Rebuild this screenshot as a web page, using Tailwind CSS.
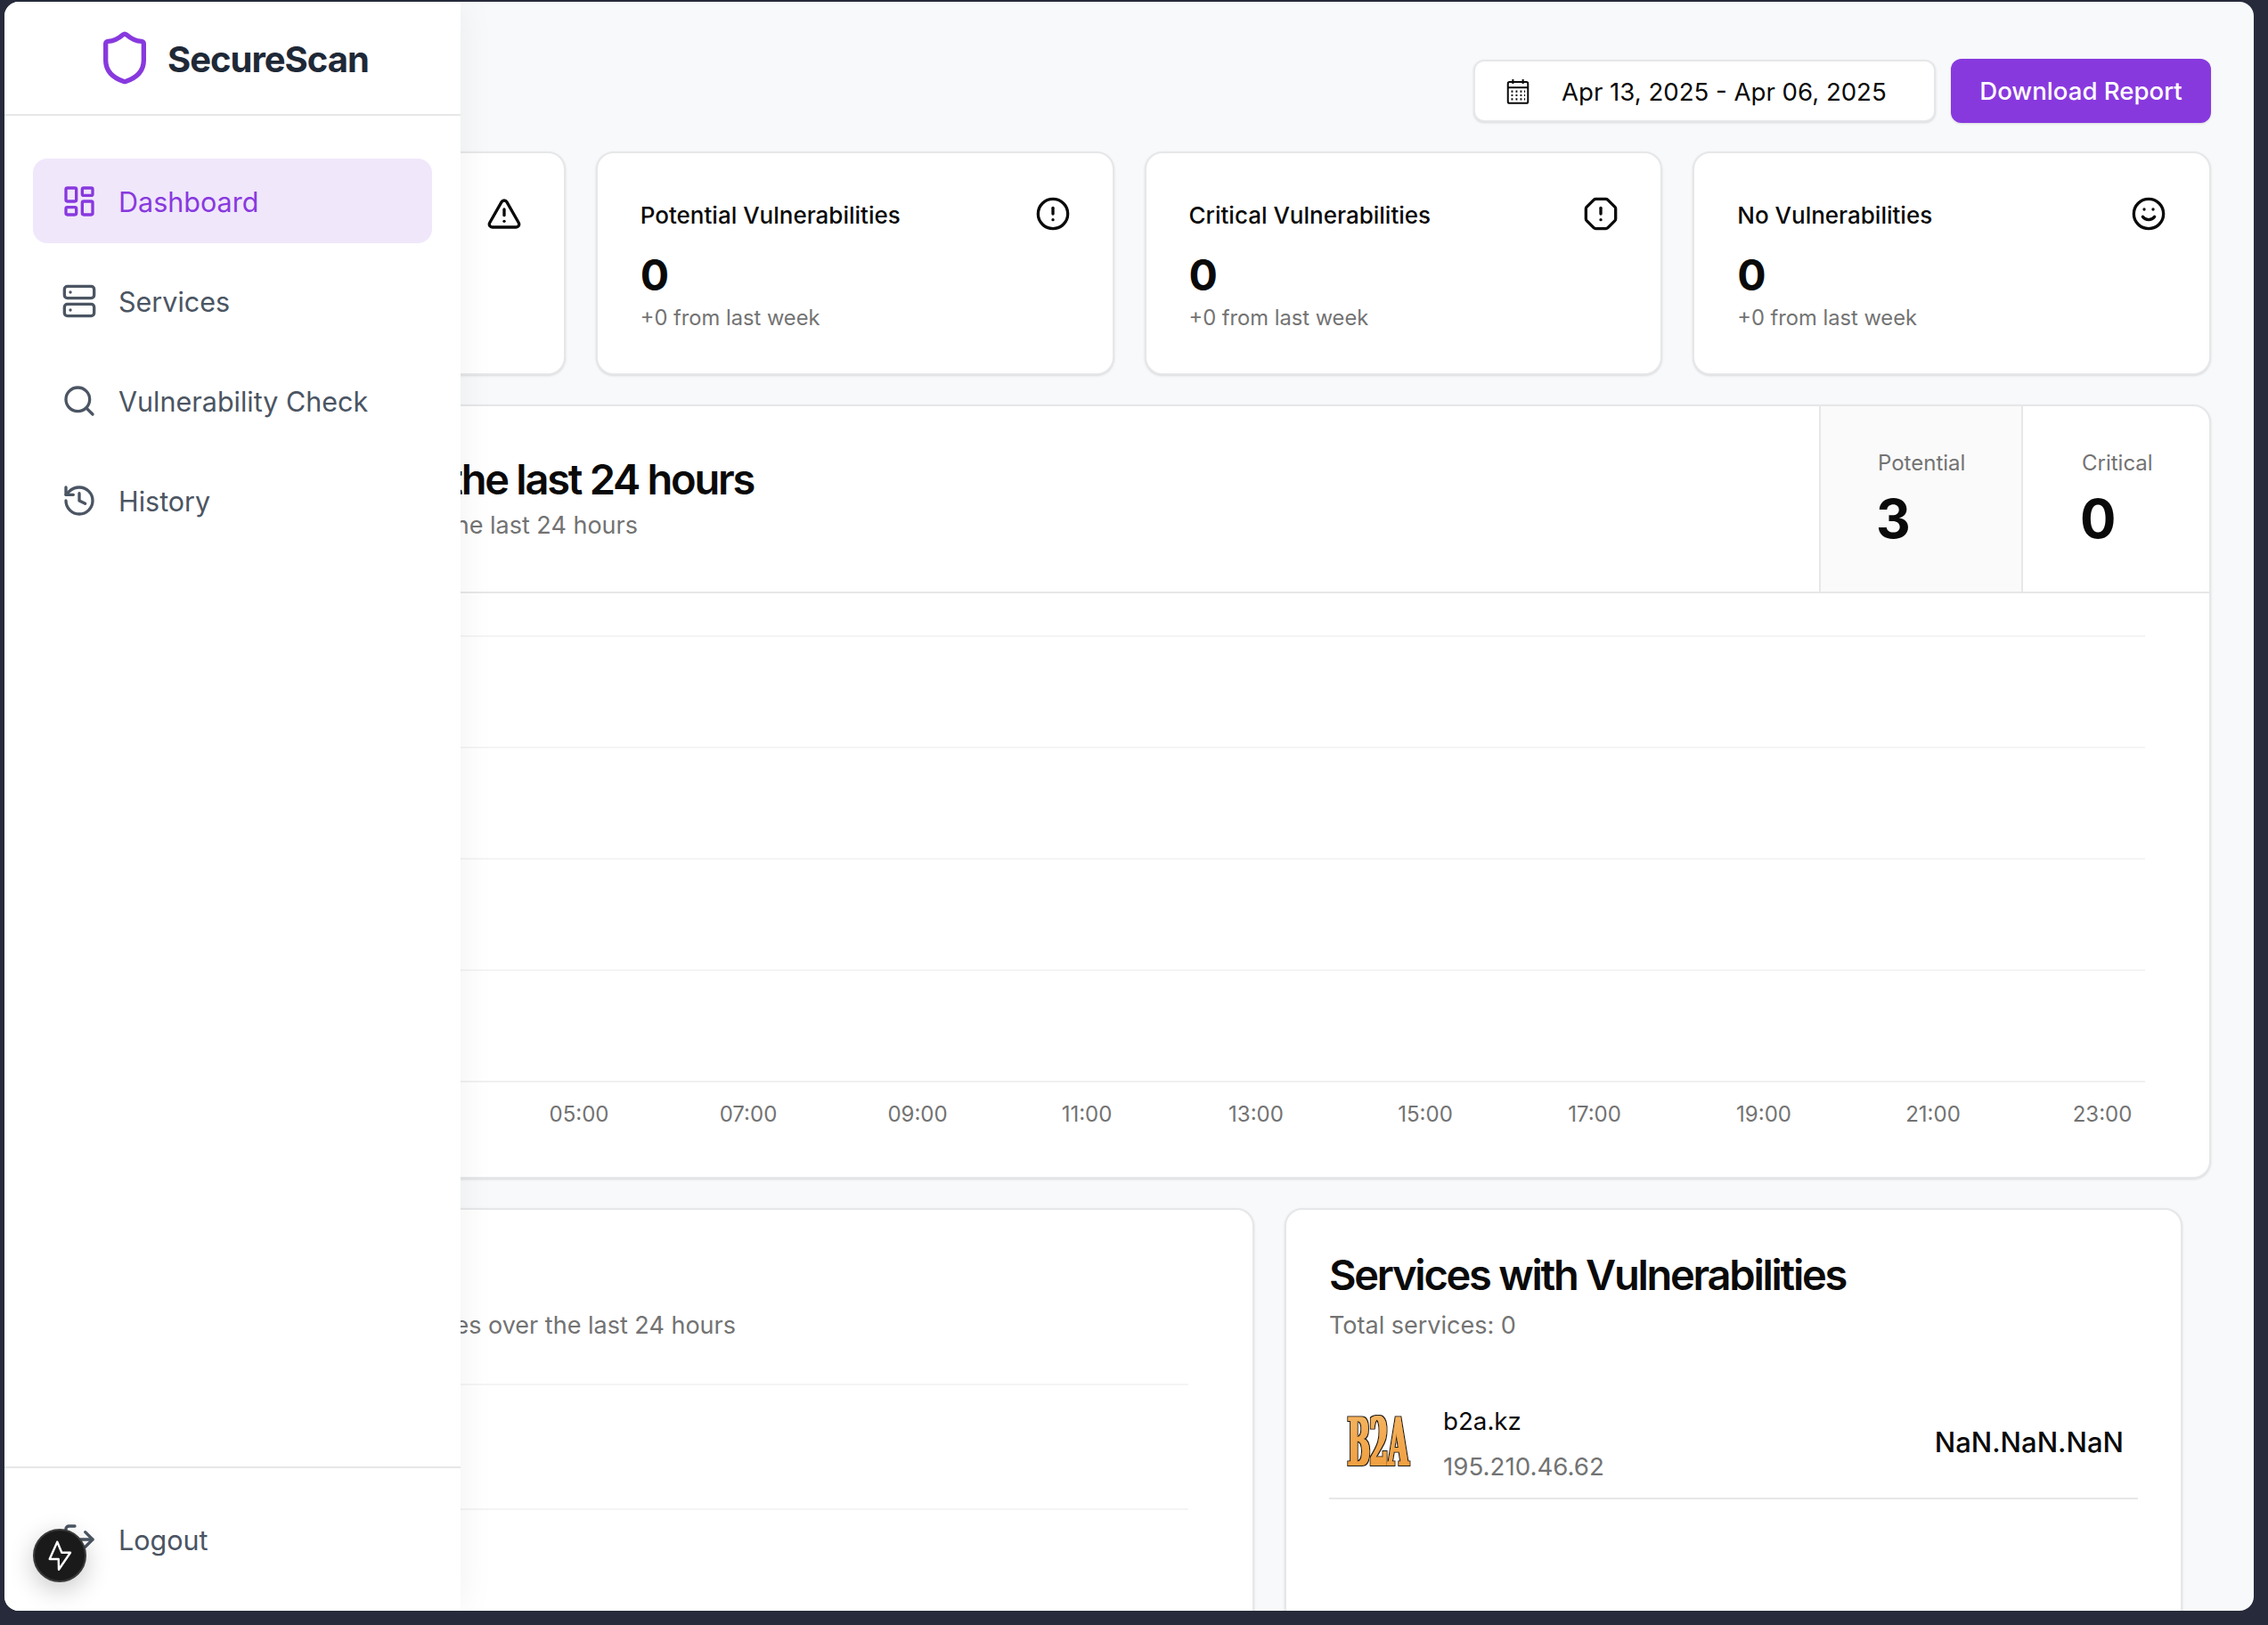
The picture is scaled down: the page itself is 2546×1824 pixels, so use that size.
<!DOCTYPE html>
<html lang="en">
<head>
<meta charset="utf-8">
<title>SecureScan</title>
<script src="https://cdn.jsdelivr.net/npm/@tailwindcss/browser@4"></script>
</head>
<body class="bg-[#262a3a] font-['Inter',sans-serif] overflow-hidden">
<div class="w-[2546px] h-[1824px] pt-[2px] pl-[5px]">
  <div class="relative w-[2525px] h-[1806px] bg-[#f8f9fb] rounded-[16px] overflow-hidden">
    <!-- main -->
    <main class="pt-[64px] pl-[48px] pr-[48px]">
      <div class="flex items-center justify-end h-[72px] mb-[32px]">
        <div class="flex gap-[17px] items-center">
          <button class="flex items-center w-[519px] h-[70px] pl-[33px] pt-[3px] bg-white border-2 border-[#e6e7e9] rounded-[12px] shadow-sm text-[27.6px] text-[#0a0a0a]">
            <svg class="w-[30px] h-[30px] mr-[34px] -mt-[3px]" viewBox="0 0 24 24" fill="none" stroke="#0a0a0a" stroke-width="1.6"><rect x="3" y="4" width="18" height="19" rx="1.5"/><path d="M3 9h18M7.5 1.5v4M16.5 1.5v4"/><path d="M6 12.5h1.5M10 12.5h1.5M14 12.5h1.5M17.5 12.5h1M6 16h1.5M10 16h1.5M14 16h1.5M17.5 16h1M6 19.5h1.5M10 19.5h1.5M14 19.5h1.5M17.5 19.5h1" stroke-width="1.7"/></svg>
            Apr 13, 2025 - Apr 06, 2025
          </button>
          <button class="w-[292px] h-[72px] pt-[2px] bg-[#8839de] rounded-[12px] shadow-sm text-[27.6px] font-medium text-white">Download Report</button>
        </div>
      </div>

      <div class="grid grid-cols-4 gap-[34px] mb-[33px]">
        <div class="h-[251px] bg-white border-2 border-[#e6e7e9] rounded-[20px] shadow-sm pt-[48px] pl-[48px] pr-[47px]">
          <div class="flex justify-end items-center h-[40px]">
            <svg class="w-[40px] h-[40px]" viewBox="0 0 24 24" fill="none" stroke="#0a0a0a" stroke-width="2" stroke-linecap="round" stroke-linejoin="round"><path d="m21.73 18-8-14a2 2 0 0 0-3.48 0l-8 14A2 2 0 0 0 4 21h16a2 2 0 0 0 1.73-3"/><path d="M12 9v4"/><path d="M12 17h.01"/></svg>
          </div>
        </div>
        <div class="h-[251px] bg-white border-2 border-[#e6e7e9] rounded-[20px] shadow-sm pt-[48px] pl-[48px] pr-[47px]">
          <div class="flex justify-between items-center h-[40px]">
            <span class="text-[26px] font-medium text-[#0a0a0a] pt-[2px]">Potential Vulnerabilities</span>
            <svg class="w-[40px] h-[40px]" viewBox="0 0 24 24" fill="none" stroke="#0a0a0a" stroke-width="2" stroke-linecap="round" stroke-linejoin="round"><circle cx="12" cy="12" r="10"/><path d="M12 8v4"/><path d="M12 16h.01"/></svg>
          </div>
          <div class="text-[48px] font-bold leading-none text-[#0a0a0a] mt-[25px]">0</div>
          <div class="text-[23.7px] leading-[36px] text-[#737373] mt-[6px]">+0 from last week</div>
        </div>
        <div class="h-[251px] bg-white border-2 border-[#e6e7e9] rounded-[20px] shadow-sm pt-[48px] pl-[48px] pr-[47px]">
          <div class="flex justify-between items-center h-[40px]">
            <span class="text-[26px] font-medium text-[#0a0a0a] pt-[2px]">Critical Vulnerabilities</span>
            <svg class="w-[40px] h-[40px]" viewBox="0 0 24 24" fill="none" stroke="#0a0a0a" stroke-width="2" stroke-linecap="round" stroke-linejoin="round"><path d="M12 16h.01"/><path d="M12 8v4"/><path d="M15.312 2a2 2 0 0 1 1.414.586l4.688 4.688A2 2 0 0 1 22 8.688v6.624a2 2 0 0 1-.586 1.414l-4.688 4.688a2 2 0 0 1-1.414.586H8.688a2 2 0 0 1-1.414-.586l-4.688-4.688A2 2 0 0 1 2 15.312V8.688a2 2 0 0 1 .586-1.414l4.688-4.688A2 2 0 0 1 8.688 2z"/></svg>
          </div>
          <div class="text-[48px] font-bold leading-none text-[#0a0a0a] mt-[25px]">0</div>
          <div class="text-[23.7px] leading-[36px] text-[#737373] mt-[6px]">+0 from last week</div>
        </div>
        <div class="h-[251px] bg-white border-2 border-[#e6e7e9] rounded-[20px] shadow-sm pt-[48px] pl-[48px] pr-[48px]">
          <div class="flex justify-between items-center h-[40px]">
            <span class="text-[26px] font-medium text-[#0a0a0a] pt-[2px]">No Vulnerabilities</span>
            <svg class="w-[40px] h-[40px]" viewBox="0 0 24 24" fill="none" stroke="#0a0a0a" stroke-width="2" stroke-linecap="round" stroke-linejoin="round"><circle cx="12" cy="12" r="10"/><path d="M8 14s1.5 2 4 2 4-2 4-2"/><path d="M9 9h.01"/><path d="M15 9h.01"/></svg>
          </div>
          <div class="text-[48px] font-bold leading-none text-[#0a0a0a] mt-[25px]">0</div>
          <div class="text-[23.7px] leading-[36px] text-[#737373] mt-[6px]">+0 from last week</div>
        </div>
      </div>

      <section class="h-[869px] bg-white border-2 border-[#e6e7e9] rounded-[20px] shadow-sm mb-[33px] overflow-hidden">
        <div class="flex h-[210px] border-b-2 border-[#e6e7e9]">
          <div class="flex-1 pl-[48px] pt-[52px]">
            <h2 class="w-[743px] text-right text-[47px] leading-[60px] font-semibold tracking-[-2.25px] text-[#0a0a0a] whitespace-nowrap">the last 24 hours</h2>
            <p class="w-[613px] text-right text-[27px] leading-[40px] text-[#737373] whitespace-nowrap mt-[2px]">the last 24 hours</p>
          </div>
          <div class="w-[229px] bg-[#fafafa] border-l-2 border-r-2 border-[#e6e7e9] pl-[64px] pt-[48px]">
            <div class="text-[24px] leading-[32px] text-[#737373]">Potential</div>
            <div class="text-[60px] leading-[76px] mt-[8px] -ml-[2px] font-bold text-[#0a0a0a]">3</div>
          </div>
          <div class="w-[209px] pl-[66px] pt-[48px]">
            <div class="text-[24px] leading-[32px] text-[#737373]">Critical</div>
            <div class="text-[60px] leading-[76px] mt-[8px] -ml-[2px] font-bold text-[#0a0a0a]">0</div>
          </div>
        </div>
        <div class="pt-[47px] pl-[48px] pr-[72px]">
          <div class="flex flex-col justify-between h-[502px]">
            <div class="border-t-2 border-[#f4f4f5]"></div>
            <div class="border-t-2 border-[#f4f4f5]"></div>
            <div class="border-t-2 border-[#f4f4f5]"></div>
            <div class="border-t-2 border-[#f4f4f5]"></div>
            <div class="border-t-2 border-[#f0f0f1]"></div>
          </div>
          <div class="flex justify-end -mr-[47px] mt-[20px] text-[24px] leading-[32px] text-[#737373]">
            <span class="w-[190px] text-center">05:00</span>
            <span class="w-[190px] text-center">07:00</span>
            <span class="w-[190px] text-center">09:00</span>
            <span class="w-[190px] text-center">11:00</span>
            <span class="w-[190px] text-center">13:00</span>
            <span class="w-[190px] text-center">15:00</span>
            <span class="w-[190px] text-center">17:00</span>
            <span class="w-[190px] text-center">19:00</span>
            <span class="w-[190px] text-center">21:00</span>
            <span class="w-[190px] text-center">23:00</span>
          </div>
        </div>
      </section>

      <div class="flex gap-[34px]">
        <section class="w-[1355px] h-[600px] bg-white border-2 border-[#e6e7e9] rounded-[20px] shadow-sm pt-[43px] pl-[48px] pr-[72px]">
          <div class="h-[60px]"></div>
          <p class="w-[723px] text-right text-[27px] leading-[40px] mt-[7px] text-[#737373] whitespace-nowrap">services over the last 24 hours</p>
          <div class="mt-[45px] border-t-2 border-[#f4f4f5]"></div>
          <div class="mt-[138px] border-t-2 border-[#f4f4f5]"></div>
        </section>
        <section class="w-[1008px] h-[600px] bg-white border-2 border-[#e6e7e9] rounded-[20px] shadow-sm pt-[43px] px-[48px]">
          <h2 class="text-[47px] leading-[60px] font-semibold tracking-[-2.25px] text-[#0a0a0a] whitespace-nowrap">Services with Vulnerabilities</h2>
          <p class="text-[27px] leading-[40px] mt-[7px] text-[#737373]">Total services: 0</p>
          <div class="flex items-center justify-between h-[127px] mt-[48px] border-b-2 border-[#e6e7e9] pl-[20px] pr-[16px]">
            <div class="flex items-center">
              <svg class="w-[72px] h-[62px] mr-[36px] overflow-visible" viewBox="0 0 72 62">
                <defs>
                  <linearGradient id="b2a" x1="0" y1="0" x2="0" y2="1"><stop offset="0" stop-color="#f4b766"/><stop offset="1" stop-color="#f09a38"/></linearGradient>
                  <filter id="fat" x="-10%" y="-10%" width="120%" height="120%">
                    <feMorphology in="SourceGraphic" operator="dilate" radius="0.9 0.4" result="fill"/>
                    <feMorphology in="SourceAlpha" operator="dilate" radius="1.7 1.1" result="grown"/>
                    <feFlood flood-color="#1f1a17"/>
                    <feComposite in2="grown" operator="in" result="edge"/>
                    <feMerge><feMergeNode in="edge"/><feMergeNode in="fill"/></feMerge>
                  </filter>
                </defs>
                <g filter="url(#fat)"><text x="35" y="27" text-anchor="middle" textLength="68" lengthAdjust="spacingAndGlyphs" transform="scale(1 2.1)" font-family="'DejaVu Serif',serif" font-weight="700" font-size="36" fill="url(#b2a)">B2A</text></g>
              </svg>
              <div class="pt-[4px]">
                <div class="text-[27.7px] leading-[36px] text-[#0a0a0a]">b2a.kz</div>
                <div class="text-[27.7px] leading-[36px] mt-[15px] text-[#737373]">195.210.46.62</div>
              </div>
            </div>
            <div class="text-[31px] font-medium text-[#0a0a0a] pt-[2px]">NaN.NaN.NaN</div>
          </div>
        </section>
      </div>
    </main>

    <!-- sidebar overlay -->
    <aside class="absolute inset-y-0 left-0 w-[512px] bg-white shadow-[0_0_40px_rgba(0,0,0,0.06)] flex flex-col">
      <div class="h-[128px] border-b-2 border-[#e6e7e9] flex items-center gap-[16px] shrink-0 pl-[103px] pt-[3px]">
        <svg class="w-[64px] h-[64px] -mt-[3px]" viewBox="0 0 24 24" fill="none" stroke="#8839de" stroke-width="2" stroke-linecap="round" stroke-linejoin="round"><path d="M20 13c0 5-3.5 7.5-7.66 8.95a1 1 0 0 1-.67-.01C7.5 20.5 4 18 4 13V6a1 1 0 0 1 1-1c2 0 4.5-1.2 6.24-2.72a1.17 1.17 0 0 1 1.52 0C14.51 3.81 17 5 19 5a1 1 0 0 1 1 1z"/></svg>
        <span class="text-[40px] font-bold text-[#1f2937] tracking-tight">SecureScan</span>
      </div>
      <nav class="flex-1 pt-[48px] px-[32px] flex flex-col gap-[17px] text-[30.5px] text-[#4b5563]">
        <a class="flex items-center gap-[24px] h-[95px] px-[32px] rounded-[16px] bg-[#f0e7fb] text-[#8839de]">
          <svg class="w-[40px] h-[40px]" viewBox="0 0 24 24" fill="none" stroke="currentColor" stroke-width="2" stroke-linecap="round" stroke-linejoin="round"><rect width="7" height="9" x="3" y="3" rx="1"/><rect width="7" height="5" x="14" y="3" rx="1"/><rect width="7" height="9" x="14" y="12" rx="1"/><rect width="7" height="5" x="3" y="16" rx="1"/></svg>
          <span class="pt-[3px]">Dashboard</span>
        </a>
        <a class="flex items-center gap-[24px] h-[95px] px-[32px]">
          <svg class="w-[40px] h-[40px]" viewBox="0 0 24 24" fill="none" stroke="currentColor" stroke-width="2" stroke-linecap="round" stroke-linejoin="round"><rect width="20" height="8" x="2" y="2" rx="2" ry="2"/><rect width="20" height="8" x="2" y="14" rx="2" ry="2"/><path d="M6 6h.01"/><path d="M6 18h.01"/></svg>
          <span class="pt-[3px]">Services</span>
        </a>
        <a class="flex items-center gap-[24px] h-[95px] px-[32px]">
          <svg class="w-[40px] h-[40px]" viewBox="0 0 24 24" fill="none" stroke="currentColor" stroke-width="2" stroke-linecap="round" stroke-linejoin="round"><circle cx="11" cy="11" r="8"/><path d="m21 21-4.3-4.3"/></svg>
          <span class="pt-[3px]">Vulnerability Check</span>
        </a>
        <a class="flex items-center gap-[24px] h-[95px] px-[32px]">
          <svg class="w-[40px] h-[40px]" viewBox="0 0 24 24" fill="none" stroke="currentColor" stroke-width="2" stroke-linecap="round" stroke-linejoin="round"><path d="M3 12a9 9 0 1 0 9-9 9.75 9.75 0 0 0-6.74 2.74L3 8"/><path d="M3 3v5h5"/><path d="M12 7v5l4 2"/></svg>
          <span class="pt-[3px]">History</span>
        </a>
      </nav>
      <div class="h-[162px] border-t-2 border-[#e6e7e9] shrink-0 pt-[32px] px-[32px] text-[30.5px] text-[#4b5563]">
        <a class="flex items-center gap-[24px] h-[95px] px-[32px]">
          <svg class="w-[40px] h-[40px]" viewBox="0 0 24 24" fill="none" stroke="currentColor" stroke-width="2" stroke-linecap="round" stroke-linejoin="round"><path d="M9 21H5a2 2 0 0 1-2-2V5a2 2 0 0 1 2-2h4"/><path d="m16 17 5-5-5-5"/><path d="M21 12H9"/></svg>
          <span class="pt-[3px]">Logout</span>
        </a>
      </div>
    </aside>

    <!-- dev indicator -->
    <button class="absolute left-[32px] top-[1714px] w-[60px] h-[60px] rounded-full bg-[#1a1a1a] border-2 border-[#3a3a3a] shadow-[0_8px_28px_rgba(0,0,0,0.22)] flex items-center justify-center">
      <svg class="w-[30px] h-[38px] ml-[3px]" viewBox="24 27 30 38" fill="none" stroke="#fff" stroke-width="2.4" stroke-linejoin="round"><path d="M34.3 30.7 25.7 50h10l.3 11.7L49 42.7h-9.7z"/></svg>
    </button>
  </div>
</div>
</body>
</html>
